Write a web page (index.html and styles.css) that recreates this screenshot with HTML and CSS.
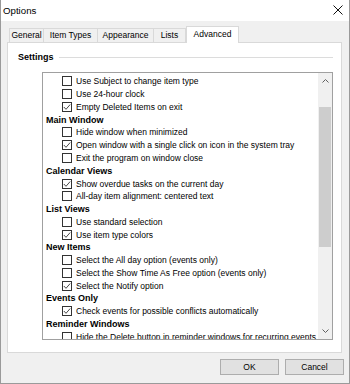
FILE: index.html
```html
<!DOCTYPE html>
<html>
<head>
    <title>Options</title>
    <link rel="stylesheet" href="styles.css">
</head>
<body>
    <div class="window">
        <div class="titlebar">
            <span class="title">Options</span>
            <svg class="close" width="10" height="10" viewBox="0 0 10 10">
                <path d="M0.5 0.5 L9.5 9.5 M9.5 0.5 L0.5 9.5" stroke="#111" stroke-width="1" fill="none"/>
            </svg>
        </div>
        <div class="body">
            <div class="tabs">
                <div class="tab tab-general">General</div>
                <div class="tab tab-types">Item Types</div>
                <div class="tab tab-appearance">Appearance</div>
                <div class="tab tab-lists">Lists</div>
                <div class="tab tab-advanced selected">Advanced</div>
            </div>
            <div class="panel">
                <div class="group-head">
                    <span class="group-label">Settings</span>
                    <div class="rule"></div>
                </div>
                <div class="listbox">
                    <div class="items">
                        <div class="row"><span class="box"></span>Use Subject to change item type</div>
                        <div class="row"><span class="box"></span>Use 24-hour clock</div>
                        <div class="row"><span class="box checked"></span>Empty Deleted Items on exit</div>
                        <div class="row head">Main Window</div>
                        <div class="row"><span class="box"></span>Hide window when minimized</div>
                        <div class="row"><span class="box checked"></span>Open window with a single click on icon in the system tray</div>
                        <div class="row"><span class="box"></span>Exit the program on window close</div>
                        <div class="row head">Calendar Views</div>
                        <div class="row"><span class="box checked"></span>Show overdue tasks on the current day</div>
                        <div class="row"><span class="box"></span>All-day item alignment: centered text</div>
                        <div class="row head">List Views</div>
                        <div class="row"><span class="box"></span>Use standard selection</div>
                        <div class="row"><span class="box checked"></span>Use item type colors</div>
                        <div class="row head">New Items</div>
                        <div class="row"><span class="box"></span>Select the All day option (events only)</div>
                        <div class="row"><span class="box"></span>Select the Show Time As Free option (events only)</div>
                        <div class="row"><span class="box checked"></span>Select the Notify option</div>
                        <div class="row head">Events Only</div>
                        <div class="row"><span class="box checked"></span>Check events for possible conflicts automatically</div>
                        <div class="row head">Reminder Windows</div>
                        <div class="row"><span class="box"></span>Hide the Delete button in reminder windows for recurring events</div>
                    </div>
                    <div class="scrollbar">
                        <div class="arrow">
                            <svg width="7" height="4" viewBox="0 0 7 4"><path d="M0.5 3.5 L3.5 0.5 L6.5 3.5" stroke="#606060" fill="none"/></svg>
                        </div>
                        <div class="track"><div class="thumb"></div></div>
                        <div class="arrow">
                            <svg width="7" height="4" viewBox="0 0 7 4"><path d="M0.5 0.5 L3.5 3.5 L6.5 0.5" stroke="#606060" fill="none"/></svg>
                        </div>
                    </div>
                </div>
            </div>
            <div class="buttons">
                <button>OK</button>
                <button>Cancel</button>
            </div>
        </div>
    </div>
</body>
</html>
```

FILE: styles.css
```css
html, body {
    margin: 0;
    padding: 0;
}

body {
    font-family: "Liberation Sans", Arial, sans-serif;
    color: #000;
}

.window {
    width: 350px;
    height: 384px;
    box-sizing: border-box;
    border: 1px solid #9a9a9a;
    border-top: none;
    display: flex;
    flex-direction: column;
    background-color: #f0f0f0;
}

.titlebar {
    height: 21px;
    background-color: #fff;
    display: flex;
    align-items: center;
    justify-content: space-between;
    padding: 0 6px 0 2px;
}

.title {
    font-size: 9.7px;
}

.close {
    display: block;
    margin-top: -1px;
}

.body {
    flex: 1;
    display: flex;
    flex-direction: column;
}

.tabs {
    display: flex;
    align-items: flex-end;
    height: 16px;
    margin-top: 5px;
    padding-left: 8px;
}

.tab {
    box-sizing: border-box;
    height: 14px;
    border: 1px solid #d9d9d9;
    border-bottom: none;
    margin-left: -1px;
    font-size: 8.5px;
    line-height: 13px;
    text-align: center;
}

.tab-general { width: 35px; margin-left: 0; }
.tab-types { width: 55px; }
.tab-appearance { width: 57px; }
.tab-lists { width: 33px; }

.tab.selected {
    width: 53px;
    height: 17px;
    margin-bottom: -1px;
    margin-left: 0;
    background-color: #fff;
    line-height: 15px;
    position: relative;
    z-index: 1;
}

.panel {
    box-sizing: border-box;
    height: 311px;
    margin: 0 7px 0 6px;
    padding: 0 8px 0 8px;
    background-color: #fff;
    border: 1px solid #d9d9d9;
}

.group-head {
    display: flex;
    align-items: center;
    height: 12px;
    margin-top: 8px;
    padding-left: 2px;
}

.group-label {
    font-size: 9px;
    font-weight: bold;
}

.rule {
    flex: 1;
    height: 1px;
    margin-left: 5px;
    background-color: #dcdcdc;
}

.listbox {
    box-sizing: border-box;
    height: 268px;
    margin: 9px 0 0 26px;
    border: 1px solid #a0a0a0;
    display: flex;
}

.items {
    flex: 1;
    overflow: hidden;
    padding-top: 2px;
}

.row {
    height: 12.78px;
    display: flex;
    align-items: center;
    padding-left: 19px;
    font-size: 8.5px;
    white-space: nowrap;
}

.row.head {
    padding-left: 3px;
    font-size: 9px;
    font-weight: bold;
}

.box {
    box-sizing: border-box;
    width: 10px;
    height: 10px;
    flex: none;
    border: 1px solid #333;
    margin-right: 4px;
    background-color: #fff;
}

.box.checked {
    background-image: url("data:image/svg+xml;utf8,<svg xmlns='http://www.w3.org/2000/svg' width='8' height='8' viewBox='0 0 8 8'><path d='M0.8 4 L3 6.3 L7.2 1.5' stroke='%23333' stroke-width='0.9' fill='none'/></svg>");
    background-repeat: no-repeat;
    background-position: center;
}

.scrollbar {
    width: 14px;
    flex: none;
    display: flex;
    flex-direction: column;
    background-color: #f0f0f0;
}

.arrow {
    height: 16px;
    display: flex;
    align-items: center;
    justify-content: center;
}

.arrow svg {
    display: block;
}

.track {
    flex: 1;
    padding: 18px 1px 0 1px;
}

.thumb {
    height: 140px;
    background-color: #cdcdcd;
}

.buttons {
    display: flex;
    justify-content: flex-end;
    gap: 6px;
    margin-top: 6px;
    padding-right: 5px;
}

button {
    box-sizing: border-box;
    width: 59px;
    height: 16px;
    padding: 0;
    background-color: #e1e1e1;
    border: 1px solid #adadad;
    font-family: "Liberation Sans", Arial, sans-serif;
    font-size: 8.5px;
    color: #000;
}
```
